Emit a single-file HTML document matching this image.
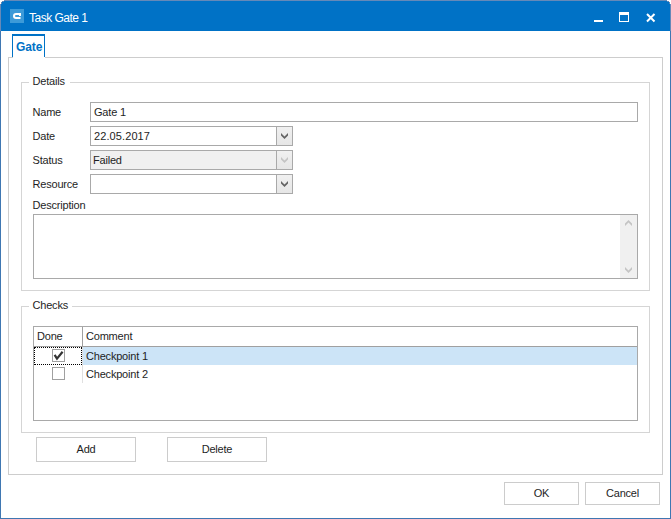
<!DOCTYPE html>
<html><head><meta charset="utf-8">
<style>
*{margin:0;padding:0;box-sizing:border-box}
html,body{width:671px;height:519px;overflow:hidden;background:#fff}
body{position:relative;font-family:"Liberation Sans",sans-serif;font-size:11px;color:#1e1e1e;letter-spacing:-0.2px}
.a{position:absolute}
.t{position:absolute;white-space:nowrap;line-height:13px}
#win{left:0;top:0;width:671px;height:519px;border:1px solid #3c78b2;background:#fff;border-radius:6px 6px 0 0;overflow:hidden}
#title{left:0;top:0;width:671px;height:31px;background:#0072c6}
.gl{position:absolute;background:#d5d5d5}
.box{position:absolute;border:1px solid #a9a9a9;background:#fff}
.btn{position:absolute;border:1px solid #cccccc;background:#fff;text-align:center;line-height:21px}
</style></head><body>
<div class="a" id="win"></div>
<div class="a" id="title"></div>
<!-- window border -->
<div class="a" style="left:0;top:0;width:1px;height:519px;background:#3f77b2"></div><div class="a" style="left:0;top:0;width:1px;height:31px;background:#6589b8"></div>
<div class="a" style="left:670px;top:0;width:1px;height:519px;background:#3f77b2"></div><div class="a" style="left:670px;top:0;width:1px;height:31px;background:#6589b8"></div>
<div class="a" style="left:0;top:518px;width:671px;height:1px;background:#3f77b2"></div>
<div class="a" style="left:0;top:0;width:671px;height:1px;background:#6589b8"></div>

<div class="a" style="left:0;top:0;width:4px;height:1px;background:#fff"></div>
<div class="a" style="left:0;top:1px;width:2px;height:1px;background:#fff"></div>
<div class="a" style="left:0;top:2px;width:1px;height:2px;background:#fff"></div>
<div class="a" style="left:2px;top:1px;width:2px;height:1px;background:#5a86ba"></div>
<div class="a" style="left:1px;top:2px;width:1px;height:2px;background:#5a86ba"></div>
<div class="a" style="left:667px;top:0;width:4px;height:1px;background:#fff"></div>
<div class="a" style="left:669px;top:1px;width:2px;height:1px;background:#fff"></div>
<div class="a" style="left:670px;top:2px;width:1px;height:2px;background:#fff"></div>
<div class="a" style="left:667px;top:1px;width:2px;height:1px;background:#5a86ba"></div>
<div class="a" style="left:669px;top:2px;width:1px;height:2px;background:#5a86ba"></div>
<!-- icon -->
<div class="a" style="left:10px;top:9px;width:14px;height:14px;background:#3c9ad8"></div>
<svg class="a" style="left:0;top:0" width="30" height="30"><path d="M20 16V14H16a2 2 0 0 0-2 2a2 2 0 0 0 2 2H20.5" fill="none" stroke="#fff" stroke-width="2"/></svg>
<div class="t" style="left:29px;top:11px;color:#fff;font-size:12px;letter-spacing:-0.5px;line-height:15px">Task Gate 1</div>
<!-- controls -->
<div class="a" style="left:594px;top:20px;width:9px;height:2px;background:#fff"></div>
<div class="a" style="left:619px;top:12px;width:10px;height:10px;border:1px solid #fff;border-top-width:3px"></div>
<svg class="a" style="left:640px;top:8px" width="20" height="20"><path d="M7 6L14.5 13.5M14.5 6L7 13.5" stroke="#fff" stroke-width="2"/></svg>

<!-- tab -->
<div class="a" style="left:8px;top:57px;width:655px;height:418px;border:1px solid #cdcdcd"></div>
<div class="a" style="left:12px;top:34px;width:33px;height:23px;border:1px solid #0072c6;border-top-width:2px;border-bottom:none;background:#fff"></div>
<div class="a" style="left:13px;top:57px;width:32px;height:1px;background:#fff"></div>
<div class="t" style="left:16px;top:41px;color:#0072c6;font-weight:bold;font-size:12px;letter-spacing:-0.1px">Gate</div>

<!-- Details group -->
<div class="gl" style="left:21px;top:82px;width:8px;height:1px"></div>
<div class="gl" style="left:70px;top:82px;width:580px;height:1px"></div>
<div class="gl" style="left:21px;top:82px;width:1px;height:209px"></div>
<div class="gl" style="left:649px;top:82px;width:1px;height:209px"></div>
<div class="gl" style="left:21px;top:290px;width:629px;height:1px"></div>
<div class="t" style="left:32.5px;top:75px">Details</div>

<div class="t" style="left:32.5px;top:106px">Name</div>
<div class="box" style="left:90px;top:102px;width:548px;height:20px"></div>
<div class="t" style="left:94px;top:106px">Gate 1</div>

<div class="t" style="left:32.5px;top:130px">Date</div>
<div class="box" style="left:90px;top:126px;width:203px;height:20px"></div>
<div class="t" style="left:94px;top:130px;letter-spacing:0.1px">22.05.2017</div>

<div class="a" style="left:276px;top:126px;width:17px;height:20px;border:1px solid #a9a9a9;background:linear-gradient(#f0f0f0,#e6e6e6)"></div>
<svg class="a" style="left:276px;top:126px" width="17" height="20"><path d="M5 7L8.5 10.5L12 7V9.5L8.5 13L5 9.5Z" fill="#646464"/></svg>
<div class="t" style="left:32.5px;top:154px">Status</div>
<div class="box" style="left:90px;top:150px;width:203px;height:20px;background:#f0f0f0"></div>
<div class="t" style="left:93px;top:154px">Failed</div>

<div class="a" style="left:276px;top:150px;width:17px;height:20px;border:1px solid #a9a9a9;background:linear-gradient(#f0f0f0,#e6e6e6)"></div>
<svg class="a" style="left:276px;top:150px" width="17" height="20"><path d="M5 7L8.5 10.5L12 7V9.5L8.5 13L5 9.5Z" fill="#c4c4c4"/></svg>
<div class="t" style="left:32.5px;top:178px">Resource</div>
<div class="box" style="left:90px;top:174px;width:203px;height:20px"></div>

<div class="a" style="left:276px;top:174px;width:17px;height:20px;border:1px solid #a9a9a9;background:linear-gradient(#f0f0f0,#e6e6e6)"></div>
<svg class="a" style="left:276px;top:174px" width="17" height="20"><path d="M5 7L8.5 10.5L12 7V9.5L8.5 13L5 9.5Z" fill="#646464"/></svg>
<div class="t" style="left:32.5px;top:199px">Description</div>
<div class="box" style="left:33px;top:214px;width:605px;height:65px"></div>
<div class="a" style="left:620px;top:215px;width:17px;height:63px;background:#f0f0f0"></div>
<svg class="a" style="left:620px;top:215px" width="17" height="63"><path d="M5 8.5L8.5 5L12 8.5V11L8.5 7.5L5 11Z" fill="#c4c4c4"/><path d="M5 52L8.5 55.5L12 52V54.5L8.5 58L5 54.5Z" fill="#c4c4c4"/></svg>

<!-- Checks group -->
<div class="gl" style="left:21px;top:306px;width:8px;height:1px"></div>
<div class="gl" style="left:72px;top:306px;width:578px;height:1px"></div>
<div class="gl" style="left:21px;top:306px;width:1px;height:127px"></div>
<div class="gl" style="left:649px;top:306px;width:1px;height:127px"></div>
<div class="gl" style="left:21px;top:432px;width:629px;height:1px"></div>
<div class="t" style="left:32.5px;top:299px">Checks</div>

<div class="box" style="left:33px;top:326px;width:605px;height:95px"></div>
<div class="a" style="left:34px;top:346px;width:603px;height:1px;background:#a0a0a0"></div>
<div class="a" style="left:82px;top:327px;width:1px;height:19px;background:#a0a0a0"></div>
<div class="a" style="left:82px;top:347px;width:1px;height:36px;background:#e0e0e0"></div>
<div class="a" style="left:83px;top:347px;width:554px;height:18px;background:#cce4f7"></div>
<div class="t" style="left:37px;top:330px">Done</div>
<div class="t" style="left:86px;top:330px">Comment</div>
<div class="t" style="left:86px;top:350px">Checkpoint 1</div>
<div class="t" style="left:86px;top:368px">Checkpoint 2</div>
<div class="a" style="left:34px;top:347px;width:48px;height:18px;border:1px dotted #000"></div>
<div class="a" style="left:52px;top:349px;width:13px;height:13px;border:1px solid #a0a0a0;background:#fff"></div>
<div class="a" style="left:52px;top:367px;width:13px;height:13px;border:1px solid #a0a0a0;background:#fff"></div>
<svg class="a" style="left:48px;top:345px" width="20" height="20"><path d="M6.6 9.8L9 13.6L14.6 6.8" fill="none" stroke="#333" stroke-width="2.2"/></svg>

<div class="btn" style="left:36px;top:437px;width:100px;height:25px;line-height:23px">Add</div>
<div class="btn" style="left:167px;top:437px;width:100px;height:25px;line-height:23px">Delete</div>
<div class="btn" style="left:504px;top:482px;width:75px;height:23px">OK</div>
<div class="btn" style="left:585px;top:482px;width:75px;height:23px">Cancel</div>
</body></html>
